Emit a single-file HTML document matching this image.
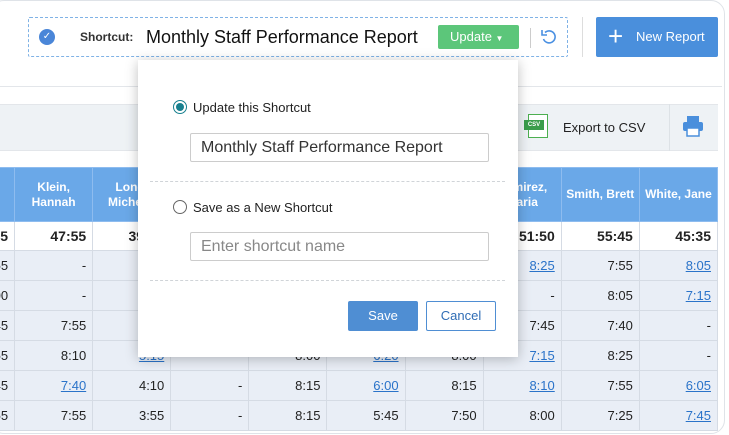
<!DOCTYPE html>
<html><head><meta charset="utf-8"><style>
*{box-sizing:border-box;margin:0;padding:0}
html,body{width:729px;height:435px;overflow:hidden}
body{background:#fff;font-family:"Liberation Sans",sans-serif;position:relative}
.card{position:absolute;left:-10px;top:0;width:735px;height:434px;border:1px solid #dfe3e8;border-radius:14px;overflow:hidden;background:#fff}
.abs{position:absolute}
table{position:absolute;top:166px;width:782px;table-layout:fixed;border-collapse:collapse;font-size:13px;color:#222}
td{height:30px;border:1px solid #d5dbe4;text-align:right;padding-right:6px;background:#e9eef6;white-space:nowrap;overflow:hidden}
tr.h td{height:54px;background:#6aa8e8;color:#fff;font-weight:bold;text-align:center;font-size:12px;line-height:15px;padding:0;border-color:#8ebcef}
tr.t td{background:#fff;font-weight:bold;font-size:14px;height:29px}
a{color:#2a73c9;text-decoration:underline}
.pop{position:absolute;left:138px;top:60px;width:380px;height:297px;background:#fff;box-shadow:0 2px 12px rgba(0,0,0,.25)}
.inp{position:absolute;left:52px;width:299px;height:29px;border:1px solid #ccc;border-radius:2px;font-size:16px;padding-left:10px;line-height:27px}
.dash{position:absolute;left:12px;width:355px;border-top:1px dashed #d0d4d8}
.lbl{position:absolute;left:55px;font-size:13px;color:#222}
</style></head><body>
<div class="card">
<table style="left:-55px">
<tr class="h"><td></td><td>Klein,<br>Hannah</td><td>Long,<br>Michelle</td><td></td><td></td><td></td><td></td><td>Ramirez,<br>Maria</td><td>Smith, Brett</td><td>White, Jane</td></tr>
<tr class="t"><td>45:35</td><td>47:55</td><td>39:35</td><td></td><td></td><td></td><td></td><td>51:50</td><td>55:45</td><td>45:35</td></tr>
<tr><td>7:55</td><td>-</td><td></td><td></td><td></td><td></td><td></td><td><a>8:25</a></td><td>7:55</td><td><a>8:05</a></td></tr>
<tr><td>8:00</td><td>-</td><td></td><td></td><td></td><td></td><td></td><td>-</td><td>8:05</td><td><a>7:15</a></td></tr>
<tr><td>7:45</td><td>7:55</td><td></td><td></td><td></td><td></td><td></td><td>7:45</td><td>7:40</td><td>-</td></tr>
<tr><td>7:55</td><td>8:10</td><td><a>5:15</a></td><td>-</td><td>8:00</td><td><a>6:20</a></td><td>8:00</td><td><a>7:15</a></td><td>8:25</td><td>-</td></tr>
<tr><td>7:45</td><td><a>7:40</a></td><td>4:10</td><td>-</td><td>8:15</td><td><a>6:00</a></td><td>8:15</td><td><a>8:10</a></td><td>7:55</td><td><a>6:05</a></td></tr>
<tr><td>7:55</td><td>7:55</td><td>3:55</td><td>-</td><td>8:15</td><td>5:45</td><td>7:50</td><td>8:00</td><td>7:25</td><td><a>7:45</a></td></tr>
</table>
</div>
<div class="abs" style="left:28px;top:17px;width:540px;height:40px;border:1px dashed #7fb2e6;border-radius:2px"></div>
<div class="abs" style="left:39px;top:29px;width:16px;height:16px;border-radius:50%;background:#4a86d8;color:#fff;font-size:10px;text-align:center;line-height:16px">✓</div>
<div class="abs" style="left:80px;top:30px;font-size:12px;font-weight:bold;color:#333">Shortcut:</div>
<div class="abs" style="left:146px;top:27px;font-size:18px;color:#111">Monthly Staff Performance Report</div>
<div class="abs" style="left:438px;top:25px;width:81px;height:24px;background:#5cc67a;color:#fff;font-size:13px;line-height:24px;padding-left:12px;border-radius:2px">Update <span style="font-size:8px">▼</span></div>
<div class="abs" style="left:530px;top:28px;width:1px;height:20px;background:#ccc"></div>
<svg class="abs" style="left:540px;top:28px" width="18" height="18" viewBox="0 0 18 18"><path d="M5 4.5A6 6 0 1 1 3.5 11" fill="none" stroke="#4a90e2" stroke-width="1.6"/><path d="M2 2v5h5" fill="none" stroke="#4a90e2" stroke-width="1.6"/></svg>
<div class="abs" style="left:582px;top:17px;width:1px;height:40px;background:#ddd"></div>
<div class="abs" style="left:596px;top:17px;width:122px;height:40px;background:#4a8fdc;color:#fff;font-size:13px;line-height:40px;border-radius:2px"><span style="position:absolute;left:12px;top:-1px;font-size:26px;font-weight:300">+</span><span style="position:absolute;left:40px">New Report</span></div>
<div class="abs" style="left:0;top:86px;width:722px;height:1px;background:#e3e6ea"></div>
<div class="abs" style="left:0;top:104px;width:718px;height:47px;background:#eef2f5;border-top:1px solid #e3e6ea;border-bottom:1px solid #e3e6ea"></div>
<div class="abs" style="left:528px;top:114px;width:20px;height:24px;border:1px solid #4caf50;background:#fff"></div>
<div class="abs" style="left:524px;top:120px;width:20px;height:10px;background:#3a9d4a;color:#fff;font-size:6px;font-weight:bold;text-align:center;line-height:10px">CSV</div>
<div class="abs" style="left:563px;top:120px;font-size:13px;color:#222">Export to CSV</div>
<div class="abs" style="left:669px;top:104px;width:1px;height:47px;background:#dde2e6"></div>
<svg class="abs" style="left:682px;top:115px" width="22" height="22" viewBox="0 0 22 22"><rect x="5" y="1" width="12" height="6" fill="#4a8fdc"/><rect x="1" y="7" width="20" height="9" rx="2" fill="#4a8fdc"/><rect x="5" y="13" width="12" height="8" fill="#fff" stroke="#4a8fdc" stroke-width="1.5"/></svg>
<div class="pop">
<div class="abs" style="left:35px;top:40px;width:14px;height:14px;border-radius:50%;border:1px solid #17808f;background:#fff"><div style="margin:2px;width:8px;height:8px;border-radius:50%;background:#17808f"></div></div>
<div class="lbl" style="top:40px">Update this Shortcut</div>
<div class="inp" style="top:73px;color:#333">Monthly Staff Performance Report</div>
<div class="dash" style="top:121px"></div>
<div class="abs" style="left:35px;top:140px;width:14px;height:14px;border-radius:50%;border:1px solid #666;background:#fff"></div>
<div class="lbl" style="top:140px">Save as a New Shortcut</div>
<div class="inp" style="top:172px;color:#888">Enter shortcut name</div>
<div class="dash" style="top:220px"></div>
<div class="abs" style="left:210px;top:241px;width:70px;height:30px;background:#4f8ed3;color:#fff;font-size:13px;text-align:center;line-height:30px;border-radius:2px">Save</div>
<div class="abs" style="left:288px;top:241px;width:70px;height:30px;border:1px solid #4f8ed3;color:#2f6db5;font-size:13px;text-align:center;line-height:28px;border-radius:2px">Cancel</div>
</div>
</body></html>
